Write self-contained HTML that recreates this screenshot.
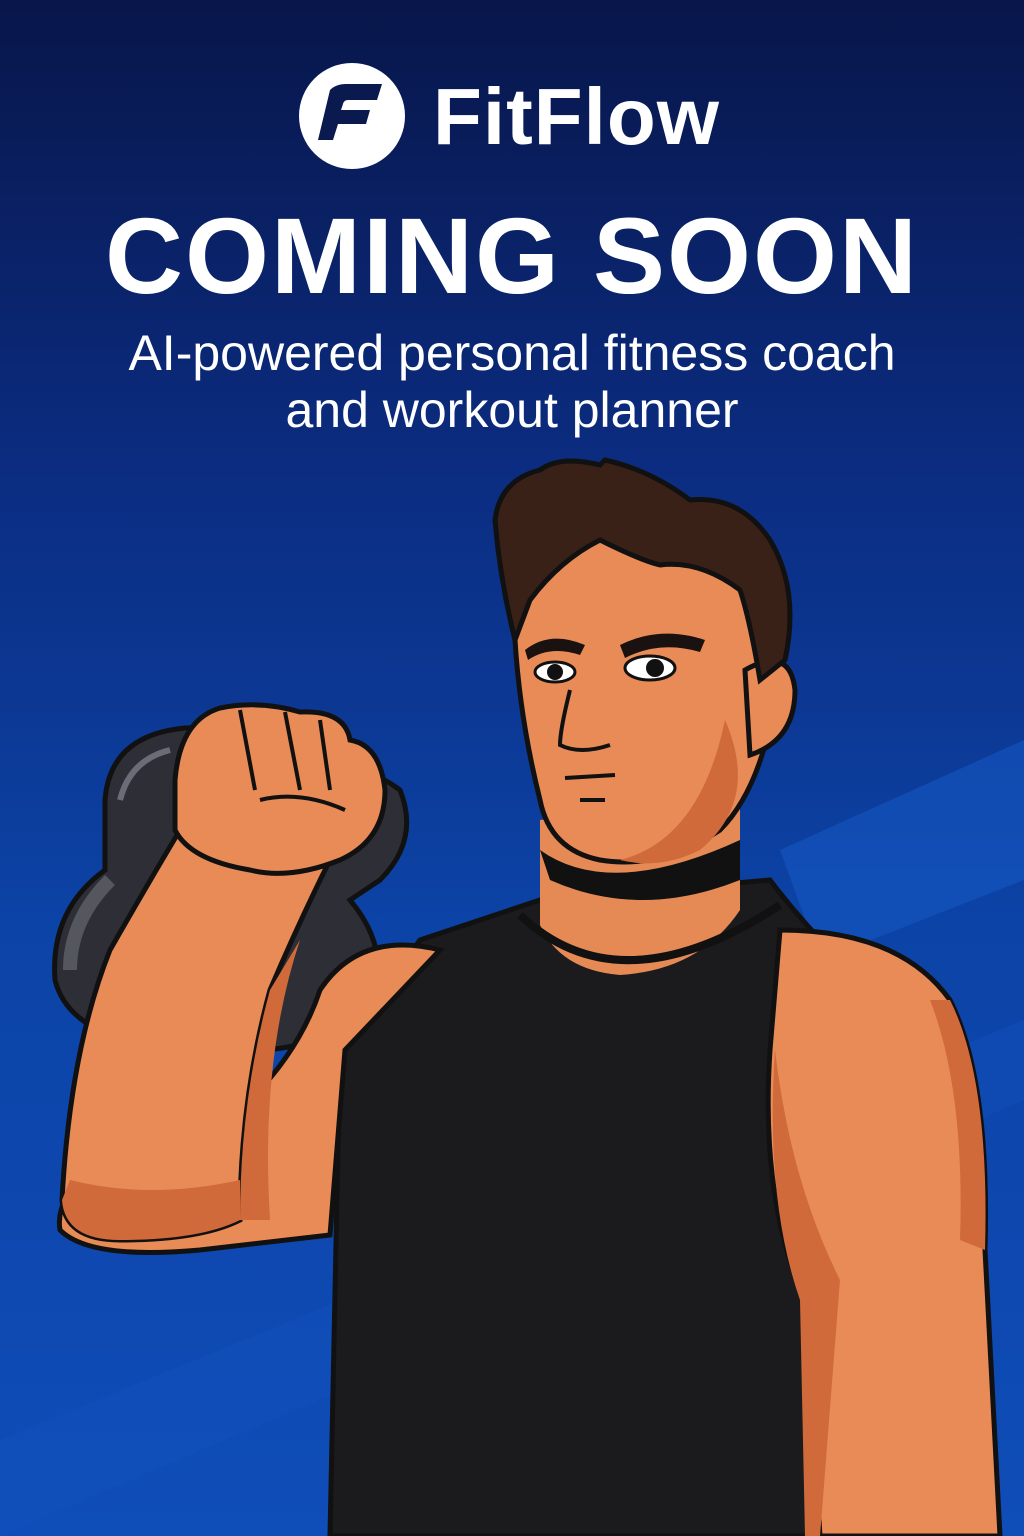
<!DOCTYPE html>
<html><head><meta charset="utf-8"><style>
html,body{margin:0;padding:0}
body{width:1024px;height:1536px;overflow:hidden;position:relative;font-family:"Liberation Sans",sans-serif;}
svg{position:absolute;left:0;top:0}
.t{position:absolute;left:0;width:1024px;text-align:center;color:#fff}
</style></head><body>
<svg width="1024" height="1536" viewBox="0 0 1024 1536">
<defs>
<linearGradient id="bg" x1="0" y1="0" x2="0" y2="1">
<stop offset="0" stop-color="#08164a"/><stop offset="0.3" stop-color="#0b2c80"/><stop offset="0.6" stop-color="#0c43a6"/><stop offset="1" stop-color="#0f4db8"/>
</linearGradient>
</defs>
<rect width="1024" height="1536" fill="url(#bg)"/>
<polygon points="780,850 1024,740 1024,880 820,960" fill="#1656c2" opacity="0.6"/>
<polygon points="0,1440 1024,1020 1024,1100 0,1536" fill="#1454c0" opacity="0.35"/>
<circle cx="352" cy="116" r="53" fill="#fff"/>
<path d="M330 90 Q336 84 346 84 L382 84 L377 100 L348 100 Q344 100 343 104 L341 110 L370 110 L366 124 L338 124 L333 140 L318 140 Z" fill="#0a1a4f"/>
<path d="M105 800 Q110 735 185 728 Q260 725 300 760 Q360 760 400 790 Q420 840 380 880 L350 900 Q400 960 360 1020 Q300 1060 180 1050 Q70 1040 55 980 Q50 910 105 870 Z" fill="#2e2f36" stroke="#111" stroke-width="5"/>
<path d="M120 800 Q130 760 170 750" stroke="#6a6c76" stroke-width="6" fill="none"/>
<path d="M70 970 Q70 920 110 880" stroke="#55575f" stroke-width="14" fill="none"/>
<path d="M420 940 Q480 920 540 900 L770 880 Q800 920 840 960 L800 1100 L810 1536 L330 1536 L340 1050 Z" fill="#1b1b1d" stroke="#111" stroke-width="5"/>
<path d="M540 820 L540 925 Q560 970 620 975 Q700 970 740 910 L740 800 Z" fill="#e58a55"/>
<path d="M540 850 Q610 900 740 840 L740 880 Q640 920 550 880 Z" fill="#111"/>
<path d="M520 915 Q620 1010 780 905" stroke="#111" stroke-width="8" fill="none"/>
<path d="M780 930 Q900 930 950 1000 Q990 1080 985 1250 L1000 1536 L820 1536 L805 1300 Q760 1200 770 1050 Z" fill="#e88b56" stroke="#111" stroke-width="5"/>
<path d="M775 1050 Q790 1180 840 1280 L820 1536 L805 1536 L800 1300 Q765 1200 775 1050Z" fill="#d06a3a"/>
<path d="M950 1000 Q990 1080 985 1250 L960 1240 Q965 1090 930 1000Z" fill="#d06a3a"/>
<path d="M440 950 Q360 930 320 990 Q300 1050 250 1100 L90 1170 Q55 1200 60 1230 Q90 1260 200 1250 L330 1235 L345 1050 Z" fill="#e88b56" stroke="#111" stroke-width="5"/>
<path d="M180 830 Q150 880 110 950 Q70 1050 62 1200 Q65 1240 120 1240 Q200 1240 240 1220 Q240 1100 270 990 Q300 920 330 860 Z" fill="#e88b56" stroke="#111" stroke-width="5"/>
<path d="M62 1200 Q65 1240 120 1240 Q200 1240 240 1220 L240 1180 Q150 1200 70 1180Z" fill="#d06a3a"/>
<path d="M240 1220 Q240 1100 270 990 L300 940 Q260 1060 270 1220Z" fill="#d06a3a"/>
<path d="M175 780 Q180 720 220 708 Q260 700 300 712 Q345 710 350 740 Q380 745 385 790 Q385 840 340 860 Q290 880 250 870 Q190 860 175 830 Z" fill="#e88b56" stroke="#111" stroke-width="5"/>
<path d="M240 710 L255 790 M285 712 L300 790 M320 720 L330 790 M260 800 Q300 790 345 810" stroke="#111" stroke-width="4" fill="none"/>
<path d="M515 590 Q520 530 600 520 Q720 515 770 580 L775 700 Q760 790 720 830 Q660 870 600 860 Q550 850 540 800 Q520 720 515 640 Z" fill="#e88b56" stroke="#111" stroke-width="5"/>
<path d="M725 720 Q760 800 700 850 Q660 870 620 860 Q700 840 725 720Z" fill="#d06a3a"/>
<path d="M745 670 Q790 645 795 690 Q795 740 750 755 Z" fill="#e88b56" stroke="#111" stroke-width="5"/>
<path d="M495 520 Q500 480 540 470 Q560 455 600 465 L605 460 Q650 470 690 500 Q740 495 770 540 Q800 590 785 660 L760 680 Q750 620 740 590 Q700 560 660 565 Q640 560 600 540 Q560 560 530 600 L515 640 Q500 580 495 520 Z" fill="#3a2118" stroke="#111" stroke-width="5"/>
<path d="M525 650 Q550 630 585 645 L580 655 Q550 645 528 660Z" fill="#1a1111"/>
<path d="M620 645 Q660 625 705 640 L700 652 Q660 640 625 658Z" fill="#1a1111"/>
<ellipse cx="555" cy="672" rx="20" ry="10" fill="#fff" stroke="#111" stroke-width="3"/>
<circle cx="555" cy="672" r="8" fill="#111"/>
<ellipse cx="650" cy="668" rx="25" ry="12" fill="#fff" stroke="#111" stroke-width="3"/>
<circle cx="655" cy="668" r="9" fill="#111"/>
<path d="M570 690 Q560 730 560 745 Q580 755 610 745" stroke="#111" stroke-width="4" fill="none"/>
<path d="M565 778 L615 775 M580 800 L605 800" stroke="#111" stroke-width="4"/>
</svg>
<div class="t" style="top:72px;left:433px;width:auto;text-align:left;font-size:80px;font-weight:bold;line-height:90px;letter-spacing:1px">FitFlow</div>
<div class="t" style="top:196px;font-size:108px;font-weight:bold;line-height:120px;letter-spacing:2px">COMING SOON</div>
<div class="t" style="top:325px;font-size:50px;line-height:57px;">AI-powered personal fitness coach<br>and workout planner</div>
</body></html>
